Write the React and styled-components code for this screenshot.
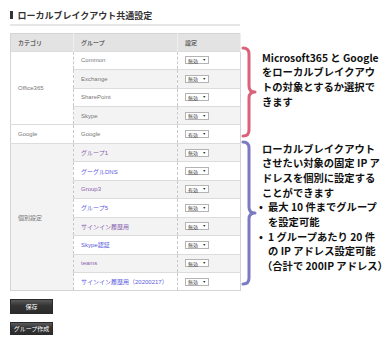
import React from 'react';
import styled, { createGlobalStyle } from 'styled-components';

const GlobalStyle = createGlobalStyle`
  html, body {
    margin: 0;
    padding: 0;
    background: #fff;
  }
  body {
    font-family: "Liberation Sans", "Noto Sans CJK JP", sans-serif;
  }
`;

const Page = styled.div`
  display: grid;
  grid-template-columns: 230px 1fr;
  column-gap: 1px;
  width: 390px;
  height: 352px;
  padding-left: 10px;
  box-sizing: border-box;
  overflow: hidden;
`;

const Main = styled.div`
  padding-top: 9px;
`;

const Title = styled.h2`
  display: flex;
  align-items: center;
  gap: 5px;
  margin: 0;
  height: 12px;
  font-size: 9px;
  font-weight: bold;
  color: #333;

  &::before {
    content: '';
    width: 2.5px;
    height: 8.5px;
    background: #333;
  }
`;

const Rule = styled.div`
  height: 2px;
  margin-top: 3px;
  background: #e6e6e6;
`;

const Table = styled.table`
  width: 230px;
  margin-top: 7px;
  border-collapse: collapse;
  table-layout: fixed;
  border: 1px solid #d4d4d4;
  font-size: 6px;
  color: #777;
`;

const Col = styled.col`
  width: ${(p) => p.$w}px;
`;

const Th = styled.th`
  height: 16.6px;
  padding: 0 0 0 7px;
  text-align: left;
  font-weight: bold;
  color: #666;
  background: #e3e3e3;
  border-right: 1px solid #efefef;
`;

const Tr = styled.tr`
  height: 18.46px;
  background: ${(p) => (p.$shade ? '#f3f3f3' : '#fff')};
`;

const Td = styled.td`
  padding: 0 0 0 7px;
  border-top: 1px solid #dcdcdc;
  border-right: 1px dashed #c8c8c8;
  vertical-align: middle;
  background: ${(p) => (p.$bg ? p.$bg : 'transparent')};
  color: ${(p) => p.$color || '#777'};
  white-space: nowrap;
  overflow: hidden;
`;

const SelectBox = styled.span`
  display: inline-flex;
  align-items: center;
  justify-content: space-between;
  width: 24px;
  height: 8px;
  padding: 0 2px;
  box-sizing: border-box;
  border: 1px solid #b4b4b4;
  background: #fff;
  font-size: 5px;
  color: #333;
`;

const Caret = styled.span`
  font-size: 3.5px;
  color: #222;
`;

const Buttons = styled.div`
  display: flex;
  flex-direction: column;
  align-items: flex-start;
  gap: 8.5px;
  margin-top: 8px;
`;

const Button = styled.button`
  width: 43px;
  height: ${(p) => p.$h}px;
  padding: 0;
  border: 1px solid #2a2a2a;
  background: linear-gradient(#5a5a5a, #333 45%, #2c2c2c);
  color: #fff;
  font-family: "Liberation Sans", "Noto Sans CJK JP", sans-serif;
  font-size: 6px;
  cursor: pointer;
`;

const Notes = styled.div`
  display: flex;
  flex-direction: column;
  gap: 2px;
  padding-top: 46px;
`;

const Note = styled.div`
  display: flex;
  gap: 5px;
`;

const Brace = styled.svg`
  flex: none;
  width: 16px;
  height: ${(p) => p.$h}px;
`;

const NoteText = styled.div`
  padding-top: ${(p) => p.$top}px;
  font-family: "Noto Sans CJK JP", sans-serif;
  font-size: 10.3px;
  line-height: 14.7px;
  font-weight: bold;
  color: #111;
  white-space: nowrap;
`;

const Bullet = styled.div`
  display: flex;
  margin-left: -3px;

  &::before {
    content: '•';
    width: 9px;
    flex: none;
  }
`;

const BLUE = '#5c5ce0';
const PURPLE = '#8a5fb0';

const office = ['Common', 'Exchange', 'SharePoint', 'Skype'];
const groups = [
  ['グループ1', PURPLE, '無効'],
  ['グーグルDNS', BLUE, '無効'],
  ['Group3', PURPLE, '有効'],
  ['グループ5', BLUE, '無効'],
  ['サインイン履歴用', PURPLE, '無効'],
  ['Skype認証', BLUE, '無効'],
  ['teams', PURPLE, '無効'],
  ['サインイン履歴用（20200217）', BLUE, '無効'],
];

const Select = ({ value }) => (
  <SelectBox>
    <span>{value}</span>
    <Caret>▼</Caret>
  </SelectBox>
);

const BraceIcon = ({ h, color }) => {
  const m = h / 2;
  const d = `M2 2 Q8 2 8 8 L8 ${m - 6} Q8 ${m} 14 ${m} Q8 ${m} 8 ${m + 6} L8 ${h - 8} Q8 ${h - 2} 2 ${h - 2}`;
  return (
    <Brace $h={h} viewBox={`0 0 16 ${h}`}>
      <path d={d} fill="none" stroke={color} strokeWidth="3" strokeLinecap="round" strokeLinejoin="round" />
    </Brace>
  );
};

const App = () => (
  <>
    <GlobalStyle />
    <Page>
      <Main>
        <Title>ローカルブレイクアウト共通設定</Title>
        <Rule />
        <Table>
          <colgroup>
            <Col $w={63} />
            <Col $w={104} />
            <Col $w={63} />
          </colgroup>
          <thead>
            <tr>
              <Th>カテゴリ</Th>
              <Th>グループ</Th>
              <Th>設定</Th>
            </tr>
          </thead>
          <tbody>
            {office.map((name, i) => (
              <Tr key={name} $shade={i % 2 === 1}>
                {i === 0 && <Td rowSpan={4} $bg="#fff">Office365</Td>}
                <Td>{name}</Td>
                <Td><Select value="無効" /></Td>
              </Tr>
            ))}
            <Tr>
              <Td>Google</Td>
              <Td>Google</Td>
              <Td><Select value="有効" /></Td>
            </Tr>
            {groups.map(([name, color, value], i) => (
              <Tr key={name} $shade={i % 2 === 0}>
                {i === 0 && <Td rowSpan={8} $bg="#f3f3f3">個別設定</Td>}
                <Td $color={color}>{name}</Td>
                <Td><Select value={value} /></Td>
              </Tr>
            ))}
          </tbody>
        </Table>
        <Buttons>
          <Button $h={14.5}>保存</Button>
          <Button $h={13}>グループ作成</Button>
        </Buttons>
      </Main>
      <Notes>
        <Note>
          <BraceIcon h={92} color="#d9637b" />
          <NoteText $top={4.5}>
            Microsoft365 と Google<br />
            をローカルブレイクアウ<br />
            トの対象とするか選択で<br />
            きます
          </NoteText>
        </Note>
        <Note>
          <BraceIcon h={146} color="#7b7bc4" />
          <NoteText $top={1.5}>
            ローカルブレイクアウト<br />
            させたい対象の固定 IP ア<br />
            ドレスを個別に設定する<br />
            ことができます
            <Bullet>
              <div>最大 10 件までグループ<br />を設定可能</div>
            </Bullet>
            <Bullet>
              <div>1 グループあたり 20 件<br />の IP アドレス設定可能</div>
            </Bullet>
            （合計で 200IP アドレス）
          </NoteText>
        </Note>
      </Notes>
    </Page>
  </>
);

export default App;
